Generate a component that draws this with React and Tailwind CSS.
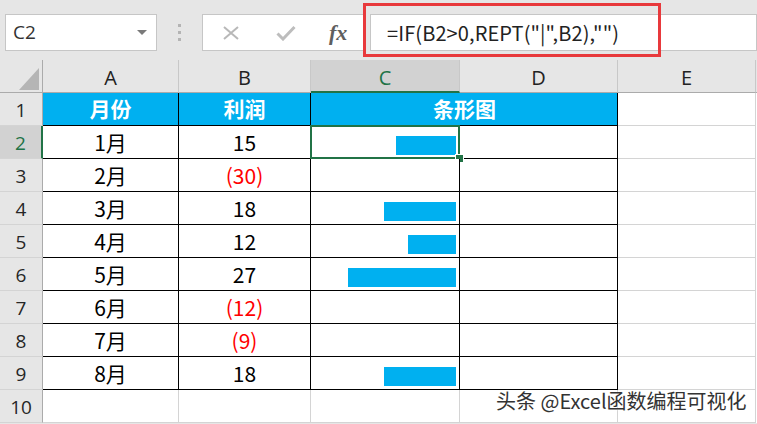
import React from 'react';

const cols = [
    { key: 'A', w: 'w-[136px]' },
    { key: 'B', w: 'w-[132px]' },
    { key: 'C', w: 'w-[149px]' },
    { key: 'D', w: 'w-[158px]' },
    { key: 'E', w: 'w-[138px]' },
];

const data = [
    { m: '1月', v: 15 },
    { m: '2月', v: -30 },
    { m: '3月', v: 18 },
    { m: '4月', v: 12 },
    { m: '5月', v: 27 },
    { m: '6月', v: -12 },
    { m: '7月', v: -9 },
    { m: '8月', v: 18 },
];

const cellFont = { fontFamily: '"Noto Sans CJK SC", "Noto Sans", sans-serif' };

const RowHeader = ({ n, active }) => (
    <div
        className={`w-[43px] h-[33px] shrink-0 flex items-center justify-center pt-[2px] text-[19px] font-['Open_Sans',sans-serif] border-b border-[#d4d4d4] ${active
            ? 'bg-[#d2d2d2] text-[#217346] border-r-2 border-r-[#217346]'
            : 'bg-[#e6e6e6] text-[#262626] border-r border-r-[#ababab]'
            }`}
    >
        {n}
    </div>
);

const App = () => {
    return (
        <div className="relative w-[757px] h-[424px] overflow-hidden bg-[#e6e6e6]" style={cellFont}>
            {/* Formula bar */}
            <div className="h-[60px] flex items-start pt-[14px]">
                <div className="ml-[5px] w-[152px] h-[37px] bg-white border border-[#c6c6c6] flex items-center justify-between pl-[7px] pr-[9px]">
                    <span className="text-[19px] text-[#333] font-['Open_Sans',sans-serif]">C2</span>
                    <span className="w-0 h-0 border-l-[5px] border-r-[5px] border-t-[5px] border-l-transparent border-r-transparent border-t-[#7a7a7a]" />
                </div>
                <div className="w-[45px] h-[37px] flex flex-col items-center justify-center gap-[4px]">
                    <span className="w-[3px] h-[3px] bg-[#b4b4b4]" />
                    <span className="w-[3px] h-[3px] bg-[#b4b4b4]" />
                    <span className="w-[3px] h-[3px] bg-[#b4b4b4]" />
                </div>
                <div className="w-[164px] h-[37px] bg-white border border-[#c6c6c6] flex items-center">
                    <svg className="ml-[19px]" width="18" height="14" viewBox="0 0 18 14">
                        <path d="M2 1 L16 13 M16 1 L2 13" stroke="#b8b8b8" strokeWidth="2" fill="none" />
                    </svg>
                    <svg className="ml-[36px]" width="20" height="16" viewBox="0 0 20 16">
                        <path d="M1.5 8.5 L7 14 L18.5 2" stroke="#bdbdbd" strokeWidth="3" fill="none" />
                    </svg>
                    <span className="ml-[33px] text-[22px] italic font-bold text-[#5f5f5f] font-['Liberation_Serif',serif] leading-none">fx</span>
                </div>
                <div className="ml-[4px] flex-1 h-[37px] bg-white border border-[#c6c6c6] flex items-center pl-[16px]">
                    <span className="text-[20px] text-[#222] tracking-[0.1px]">=IF(B2&gt;0,REPT("|",B2),"")</span>
                </div>
            </div>

            {/* Column headers */}
            <div className="flex h-[33px]">
                <div className="w-[43px] shrink-0 relative bg-[#e6e6e6] border-r border-b border-[#ababab]">
                    <svg className="absolute right-[3px] bottom-[2px]" width="20" height="22" viewBox="0 0 20 22">
                        <path d="M20 0 L20 22 L0 22 Z" fill="#b5b5b5" />
                    </svg>
                </div>
                {cols.map((c) => (
                    <div
                        key={c.key}
                        className={`${c.w} shrink-0 flex items-center justify-center pt-[4px] text-[20px] font-['Open_Sans',sans-serif] border-r border-r-[#c8c8c8] ${c.key === 'C'
                            ? 'bg-[#d2d2d2] text-[#217346] border-b-2 border-b-[#217346]'
                            : 'bg-[#e6e6e6] text-[#222] border-b border-b-[#ababab]'
                            }`}
                    >
                        {c.key}
                    </div>
                ))}
                <div className="flex-1 border-b border-[#ababab]" />
            </div>

            {/* Row 1 - headers */}
            <div className="flex h-[33px]">
                <RowHeader n={1} />
                {['月份', '利润', '', ''].map((t, i) => (
                    <div
                        key={i}
                        className={`${cols[i].w} shrink-0 bg-[#00b0f0] text-white font-bold text-[21px] flex items-center justify-center border-b border-black ${i === 2 ? '' : 'border-r'}`}
                    >
                        {t}
                    </div>
                ))}
                <div className="w-[138px] shrink-0 bg-white border-r border-b border-[#d4d4d4]" />
                <div className="flex-1 bg-white" />
            </div>

            {/* Data rows */}
            {data.map((r, idx) => {
                const rowNo = idx + 2;
                const neg = r.v < 0;
                return (
                    <div key={rowNo} className="flex h-[33px]">
                        <RowHeader n={rowNo} active={rowNo === 2} />
                        <div className="w-[136px] shrink-0 bg-white flex items-center justify-center pt-[2px] text-[21px] text-black border-r border-b border-black">
                            {r.m}
                        </div>
                        <div className={`w-[132px] shrink-0 bg-white flex items-center justify-center pt-[2px] text-[21px] border-r border-b border-black ${neg ? 'text-[#ff0000]' : 'text-black'}`}>
                            {neg ? `(${-r.v})` : r.v}
                        </div>
                        <div className="relative w-[149px] shrink-0 bg-white flex items-end justify-end pb-[3px] pr-[3px] border-r border-b border-black">
                            {!neg && <div className="h-[19px] bg-[#00b0f0]" style={{ width: r.v * 4 }} />}
                            {rowNo === 2 && (
                                <>
                                    <div className="absolute -top-px -left-px w-[150px] h-[34px] border-2 border-[#217346]" />
                                    <div className="absolute -right-[4px] -bottom-[4px] w-[7px] h-[7px] bg-[#217346] outline outline-1 outline-white" />
                                </>
                            )}
                        </div>
                        <div className="w-[158px] shrink-0 bg-white border-r border-b border-black" />
                        <div className="w-[138px] shrink-0 bg-white border-r border-b border-[#d4d4d4]" />
                        <div className="flex-1 bg-white" />
                    </div>
                );
            })}

            {/* Row 10 */}
            <div className="flex h-[33px]">
                <RowHeader n={10} />
                {cols.map((c) => (
                    <div key={c.key} className={`${c.w} shrink-0 bg-white border-r border-b border-[#d4d4d4]`} />
                ))}
                <div className="flex-1 bg-white" />
            </div>

            {/* merged header text over C1:D1 */}
            <div className="absolute left-[311px] top-[93px] w-[307px] h-[32px] flex items-center justify-center text-white font-bold text-[21px] pointer-events-none">
                条形图
            </div>

            {/* highlight around formula */}
            <div className="absolute left-[363px] top-[3px] w-[298px] h-[54px] border-[3px] border-[#e8393c]" />

            {/* watermark */}
            <div className="absolute left-[496px] top-[386px] text-[20px] text-[#333] [text-shadow:0_0_2px_#fff,0_0_1px_#fff]">
                头条 @Excel函数编程可视化
            </div>
        </div>
    );
};

export default App;
